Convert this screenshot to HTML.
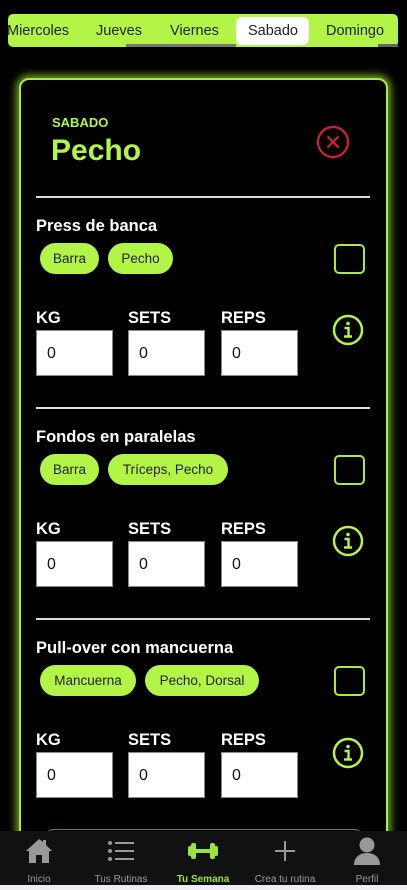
<!DOCTYPE html>
<html><head><meta charset="utf-8"><style>
*{margin:0;padding:0;box-sizing:border-box}
body{width:407px;height:890px;background:#000;position:relative;overflow:hidden;font-family:"Liberation Sans",sans-serif}
.a{position:absolute}
.tabs{left:8px;top:14px;width:390px;height:33px;background:#b2f547;border-radius:5px}
.tab{position:absolute;top:9px;font-size:14.5px;color:#222;white-space:nowrap}
.act{left:236px;top:17px;width:73px;height:28px;background:#fff;border-radius:6px}
.card{left:19px;top:78px;width:369px;height:800px;border:2px solid #a8ec40;border-radius:10px;background:#000;box-shadow:0 0 8px 3px rgba(160,230,60,.7)}
.line{left:36px;width:334px;height:2px;background:#ddd}
.title{left:36px;color:#fff;font-weight:bold;font-size:16.5px}
.chip{height:31px;background:#b2f547;border-radius:16px;font-size:13.5px;color:#222;line-height:31px;text-align:center}
.cb{left:334px;width:31px;height:30px;border:2px solid #a8ec40;border-radius:5px}
.lab{color:#fff;font-size:16.5px;font-weight:bold}
.inp{width:77px;height:46px;background:#fff;border:1px solid #888;font-size:16px;color:#111;padding:14px 0 0 10px}
.nav{left:0;top:831px;width:407px;height:54px;background:#111}
.ni{position:absolute;top:43px;width:82px;text-align:center;font-size:10px;color:#999}
</style></head><body>
<div class="a tabs"></div>
<div class="a act"></div>
<div class="a" style="left:378px;top:44px;width:20px;height:3px;background:#666"></div>
<div class="a" style="left:126px;top:44px;width:110px;height:3px;background:#777"></div>
<div class="tab a" style="left:7px;top:23px">Miercoles</div>
<div class="tab a" style="left:96px;top:23px">Jueves</div>
<div class="tab a" style="left:170px;top:23px">Viernes</div>
<div class="tab a" style="left:248px;top:23px">Sabado</div>
<div class="tab a" style="left:326px;top:23px">Domingo</div>

<div class="a card"></div>
<div class="a" style="left:52px;top:115px;color:#b2f547;font-weight:bold;font-size:13px">SABADO</div>
<div class="a" style="left:51px;top:134px;color:#b2f547;font-weight:bold;font-size:30px">Pecho</div>
<svg class="a" style="left:316px;top:125px" width="34" height="34" viewBox="0 0 34 34"><circle cx="17" cy="17" r="15" fill="none" stroke="#d42030" stroke-width="2.2"/><path d="M11.5 11.5L22.5 22.5M22.5 11.5L11.5 22.5" stroke="#d42030" stroke-width="2.2"/></svg>
<div class="a line" style="top:196px"></div>

<!-- ex1 -->
<div class="a title" style="top:217px">Press de banca</div>
<div class="a chip" style="left:40px;top:243px;width:59px">Barra</div>
<div class="a chip" style="left:108px;top:243px;width:65px">Pecho</div>
<div class="a cb" style="top:244px"></div>
<div class="a lab" style="left:36px;top:309px">KG</div>
<div class="a lab" style="left:128px;top:309px">SETS</div>
<div class="a lab" style="left:221px;top:309px">REPS</div>
<div class="a inp" style="left:36px;top:330px">0</div>
<div class="a inp" style="left:128px;top:330px">0</div>
<div class="a inp" style="left:221px;top:330px">0</div>
<svg class="a" style="left:332px;top:314px" width="32" height="32" viewBox="0 0 32 32"><circle cx="16" cy="16" r="14" fill="none" stroke="#b2f547" stroke-width="2.5"/><circle cx="16" cy="9.5" r="1.8" fill="#b2f547"/><path d="M12.5 14h4v8M12 22.5h8" stroke="#b2f547" stroke-width="2.4" fill="none"/></svg>
<div class="a line" style="top:407px"></div>

<!-- ex2 -->
<div class="a title" style="top:428px">Fondos en paralelas</div>
<div class="a chip" style="left:40px;top:454px;width:59px">Barra</div>
<div class="a chip" style="left:108px;top:454px;width:120px">Tríceps, Pecho</div>
<div class="a cb" style="top:455px"></div>
<div class="a lab" style="left:36px;top:520px">KG</div>
<div class="a lab" style="left:128px;top:520px">SETS</div>
<div class="a lab" style="left:221px;top:520px">REPS</div>
<div class="a inp" style="left:36px;top:541px">0</div>
<div class="a inp" style="left:128px;top:541px">0</div>
<div class="a inp" style="left:221px;top:541px">0</div>
<svg class="a" style="left:332px;top:525px" width="32" height="32" viewBox="0 0 32 32"><circle cx="16" cy="16" r="14" fill="none" stroke="#b2f547" stroke-width="2.5"/><circle cx="16" cy="9.5" r="1.8" fill="#b2f547"/><path d="M12.5 14h4v8M12 22.5h8" stroke="#b2f547" stroke-width="2.4" fill="none"/></svg>
<div class="a line" style="top:618px"></div>

<!-- ex3 -->
<div class="a title" style="top:639px">Pull-over con mancuerna</div>
<div class="a chip" style="left:40px;top:665px;width:96px">Mancuerna</div>
<div class="a chip" style="left:145px;top:665px;width:114px">Pecho, Dorsal</div>
<div class="a cb" style="top:666px"></div>
<div class="a lab" style="left:36px;top:731px">KG</div>
<div class="a lab" style="left:128px;top:731px">SETS</div>
<div class="a lab" style="left:221px;top:731px">REPS</div>
<div class="a inp" style="left:36px;top:752px">0</div>
<div class="a inp" style="left:128px;top:752px">0</div>
<div class="a inp" style="left:221px;top:752px">0</div>
<svg class="a" style="left:332px;top:737px" width="32" height="32" viewBox="0 0 32 32"><circle cx="16" cy="16" r="14" fill="none" stroke="#b2f547" stroke-width="2.5"/><circle cx="16" cy="9.5" r="1.8" fill="#b2f547"/><path d="M12.5 14h4v8M12 22.5h8" stroke="#b2f547" stroke-width="2.4" fill="none"/></svg>
<div class="a" style="left:44px;top:829px;width:320px;height:20px;border:1px solid #5a8a20;border-radius:12px"></div>

<div class="a nav">
 <svg class="a" style="left:24px;top:5px" width="30" height="30" viewBox="0 0 30 30"><path d="M15 3L2 15h3v12h7v-8h6v8h7V15h3L22 9V4h-3v2z" fill="#999"/></svg>
 <svg class="a" style="left:107px;top:9px" width="28" height="22" viewBox="0 0 28 22"><g fill="#999"><circle cx="3" cy="3" r="2"/><circle cx="3" cy="11" r="2"/><circle cx="3" cy="19" r="2"/><rect x="8" y="2" width="19" height="2"/><rect x="8" y="10" width="19" height="2"/><rect x="8" y="18" width="19" height="2"/></g></svg>
 <svg class="a" style="left:187px;top:11px" width="32" height="18" viewBox="0 0 32 18"><g fill="#9be53a"><rect x="1" y="4" width="4" height="10" rx="2"/><rect x="4" y="1" width="5" height="16" rx="2"/><rect x="9" y="7" width="14" height="4"/><rect x="23" y="1" width="5" height="16" rx="2"/><rect x="27" y="4" width="4" height="10" rx="2"/></g></svg>
 <svg class="a" style="left:274px;top:9px" width="22" height="22" viewBox="0 0 22 22"><path d="M11 1v20M1 11h20" stroke="#999" stroke-width="2"/></svg>
 <svg class="a" style="left:353px;top:5px" width="28" height="30" viewBox="0 0 28 30"><circle cx="14" cy="9" r="7.5" fill="#999"/><path d="M1 29c0-8 6-12 13-12s13 4 13 12z" fill="#999"/></svg>
 <div class="ni" style="left:-2px">Inicio</div>
 <div class="ni" style="left:80px">Tus Rutinas</div>
 <div class="ni" style="left:162px;color:#9be53a;font-weight:bold">Tu Semana</div>
 <div class="ni" style="left:244px">Crea tu rutina</div>
 <div class="ni" style="left:326px">Perfil</div>
</div>
<div class="a" style="left:0;top:885px;width:407px;height:5px;background:#eeeef2"></div>
</body></html>
